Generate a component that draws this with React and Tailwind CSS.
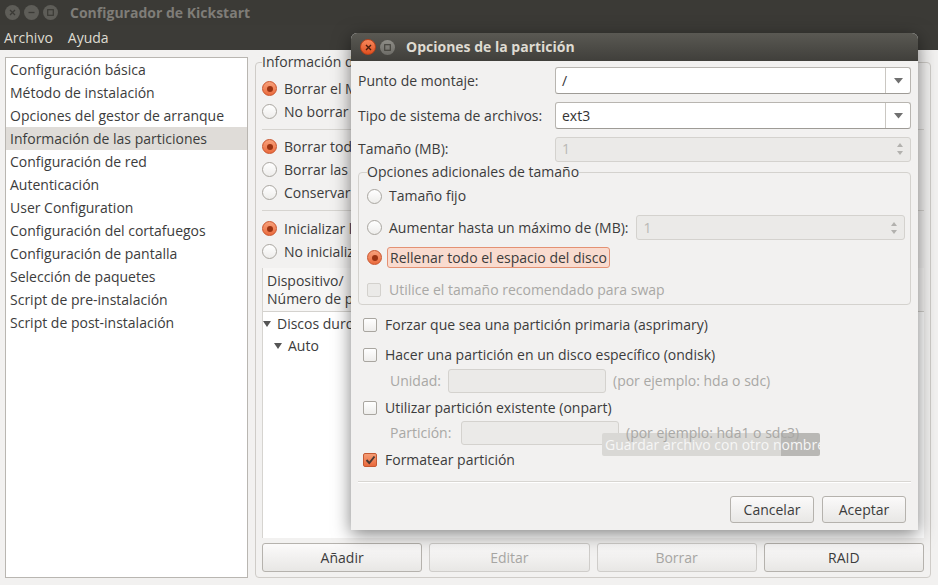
import React from 'react'

const Radio = ({ checked }) => (
  <span
    className={`w-[15px] h-[15px] rounded-full shrink-0 flex items-center justify-center border ${
      checked
        ? 'border-[#c9532b] bg-gradient-to-b from-[#f7a07a] to-[#ea6b3d]'
        : 'border-[#a9a6a0] bg-gradient-to-b from-white to-[#eeedeb]'
    }`}
  >
    {checked && <span className="w-[6px] h-[6px] rounded-full bg-[#9a3312]" />}
  </span>
)

const Check = ({ checked, disabled }) => (
  <span
    className={`w-[14px] h-[14px] rounded-[2px] shrink-0 border flex items-center justify-center ${
      checked
        ? 'border-[#c55a33] bg-gradient-to-b from-[#f59d75] to-[#e9693b]'
        : disabled
        ? 'border-[#d3d1cd] bg-[#ebeae8]'
        : 'border-[#a9a6a0] bg-gradient-to-b from-white to-[#eeedeb]'
    }`}
  >
    {checked && (
      <svg width="11" height="10" viewBox="0 0 11 10">
        <path d="M1.5 5 L4.3 8 L9.5 1.5" fill="none" stroke="#4b3a33" strokeWidth="2" />
      </svg>
    )}
  </span>
)

const Combo = ({ value }) => (
  <div className="flex h-[27px] w-[356px] rounded-[3px] border border-[#b8b5b0] border-b-[#9e9b96] bg-white">
    <div className="flex-1 flex items-center pl-[6px] text-[#333]">{value}</div>
    <div className="w-[25px] border-l border-[#cac7c2] flex items-center justify-center">
      <svg width="9" height="6" viewBox="0 0 9 6">
        <polygon points="0,0 9,0 4.5,5.5" fill="#707070" />
      </svg>
    </div>
  </div>
)

const Spin = ({ className }) => (
  <div className={`flex h-[25px] rounded-[3px] border border-[#d4d2ce] bg-[#ebeae8] ${className}`}>
    <div className="flex-1 flex items-center pl-[6px] text-[#b9b8b5]">1</div>
    <div className="w-[20px] flex flex-col items-center justify-center gap-[4px]">
      <svg width="6" height="4" viewBox="0 0 6 4"><polygon points="0,4 6,4 3,0" fill="#b2b1ae" /></svg>
      <svg width="6" height="4" viewBox="0 0 6 4"><polygon points="0,0 6,0 3,4" fill="#b2b1ae" /></svg>
    </div>
  </div>
)

const Btn = ({ children, disabled, className = '' }) => (
  <div
    className={`flex items-center justify-center rounded-[3px] border bg-gradient-to-b from-[#fbfafa] to-[#e8e7e5] ${
      disabled ? 'border-[#cfcdca] text-[#a7a6a3]' : 'border-[#b5b2ad] text-[#3c3c3c]'
    } ${className}`}
  >
    {children}
  </div>
)

const Arrow = () => (
  <svg width="8" height="7" viewBox="0 0 8 7" className="shrink-0">
    <polygon points="0,0 8,0 4,6" fill="#555" />
  </svg>
)

const sections = [
  'Configuración básica',
  'Método de instalación',
  'Opciones del gestor de arranque',
  'Información de las particiones',
  'Configuración de red',
  'Autenticación',
  'User Configuration',
  'Configuración del cortafuegos',
  'Configuración de pantalla',
  'Selección de paquetes',
  'Script de pre-instalación',
  'Script de post-instalación',
]

const RadioRow = ({ checked, children }) => (
  <div className="flex items-center gap-[7px] h-[23px] whitespace-nowrap">
    <Radio checked={checked} />
    <span>{children}</span>
  </div>
)

const CheckRow = ({ checked, children, className = '' }) => (
  <div className={`flex items-center gap-[8px] h-[20px] ml-[5px] whitespace-nowrap ${className}`}>
    <Check checked={checked} />
    <span>{children}</span>
  </div>
)

export default function App() {
  return (
    <div className="relative w-[938px] h-[585px] overflow-hidden bg-[#f2f1f0] text-[14px] leading-[18px] text-[#3c3c3c] font-['Open_Sans','Noto_Sans',sans-serif]">
      {/* title bar */}
      <div className="h-[25px] bg-[#3b3a36] flex items-center pl-[5px]">
        <div className="flex items-center gap-[4px]">
          {['x', '-', 'o'].map((g) => (
            <span key={g} className="w-[15px] h-[15px] rounded-full bg-[#5e5d58] flex items-center justify-center">
              <svg width="7" height="7" viewBox="0 0 7 7">
                {g === 'x' && <path d="M1 1 L6 6 M6 1 L1 6" stroke="#3b3a36" strokeWidth="1.3" />}
                {g === '-' && <path d="M0.5 3.5 H6.5" stroke="#3b3a36" strokeWidth="1.3" />}
                {g === 'o' && <rect x="0.7" y="0.7" width="5.6" height="5.6" fill="none" stroke="#3b3a36" strokeWidth="1.2" />}
              </svg>
            </span>
          ))}
        </div>
        <span className="ml-[12px] font-bold text-[14px] text-[#7f7d78]">Configurador de Kickstart</span>
      </div>
      {/* menu bar */}
      <div className="h-[25px] bg-[#3c3b37] flex items-center gap-[15px] pl-[4px] text-[#dfdbd2]">
        <span>Archivo</span>
        <span>Ayuda</span>
      </div>

      <div className="flex gap-[7px] pl-[5px] pr-[7px] pt-[3px] pb-[7px] h-[535px]">
        {/* sidebar */}
        <div className="w-[243px] mt-[4px] bg-white border border-[#b9b6b1]">
          {sections.map((s, i) => (
            <div key={s} className={`h-[23px] flex items-center pl-[4px] whitespace-nowrap ${i === 3 ? 'bg-[#dfdcd8]' : ''}`}>
              {s}
            </div>
          ))}
        </div>

        {/* right panel */}
        <fieldset className="flex-1 min-w-0 border border-[#cfccc8] rounded-[4px] px-[6px] pt-[6px] pb-[5px] flex flex-col">
          <legend className="px-0 whitespace-nowrap">Información de la partición</legend>
          <RadioRow checked>Borrar el Master Boot Record</RadioRow>
          <RadioRow>No borrar el Master Boot Record</RadioRow>
          <div className="mt-[6px] h-px bg-[#d6d4d0]" />
          <div className="mt-[5px]" />
          <RadioRow checked>Borrar todas las particiones existentes</RadioRow>
          <RadioRow>Borrar las particiones Linux existentes</RadioRow>
          <RadioRow>Conservar las particiones existentes</RadioRow>
          <div className="mt-[6px] h-px bg-[#d6d4d0]" />
          <div className="mt-[6px]" />
          <RadioRow checked>Inicializar la etiqueta del disco</RadioRow>
          <RadioRow>No inicializar la etiqueta del disco</RadioRow>

          <div className="mt-[5px] flex-1 bg-white border-l border-[#d6d4d0] flex flex-col">
            <div className="h-[44px] flex border-b border-[#d4d2ce] bg-[#f7f6f5]">
              {['Dispositivo/\nNúmero de partición', 'Punto de montaje/\nRAID/Volumen', 'Tipo', 'Formato', 'Tamaño (MB)', 'Inicio', 'Fin'].map((h) => (
                <div key={h} className="px-[4px] pt-[4px] whitespace-pre border-r border-[#e2e0dd] w-[140px] shrink-0">
                  {h}
                </div>
              ))}
            </div>
            <div className="flex items-center gap-[6px] h-[22px] mt-[1px] pl-[0px]">
              <Arrow />
              <span>Discos duros</span>
            </div>
            <div className="flex items-center gap-[6px] h-[22px] pl-[11px]">
              <Arrow />
              <span>Auto</span>
            </div>
          </div>

          <div className="mt-[5px] flex gap-[7px] h-[29px]">
            <Btn className="flex-1">Añadir</Btn>
            <Btn className="flex-1" disabled>Editar</Btn>
            <Btn className="flex-1" disabled>Borrar</Btn>
            <Btn className="flex-1">RAID</Btn>
          </div>
        </fieldset>
      </div>

      {/* dialog window */}
      <div className="absolute left-[351px] top-[33px] w-[567px] h-[497px] rounded-t-[6px] bg-[#f2f1f0] shadow-[0_4px_18px_rgba(0,0,0,0.5)] flex flex-col">
        <div className="h-[28px] rounded-t-[6px] bg-gradient-to-b from-[#5a5953] to-[#403f3b] flex items-center pl-[9px]">
          <span className="w-[16px] h-[16px] rounded-full bg-gradient-to-b from-[#f7875a] to-[#df4f1e] border border-[#b8421b] flex items-center justify-center">
            <svg width="7" height="7" viewBox="0 0 7 7">
              <path d="M1 1 L6 6 M6 1 L1 6" stroke="#4a1d0c" strokeWidth="1.4" />
            </svg>
          </span>
          <span className="ml-[4px] w-[15px] h-[15px] rounded-full bg-gradient-to-b from-[#8e8d87] to-[#6d6c67] flex items-center justify-center">
            <svg width="7" height="7" viewBox="0 0 7 7">
              <rect x="0.7" y="0.7" width="5.6" height="5.6" fill="none" stroke="#46453f" strokeWidth="1.2" />
            </svg>
          </span>
          <span className="ml-[11px] font-bold text-[#dfdbd2]">Opciones de la partición</span>
        </div>

        <div className="flex-1 flex flex-col px-[7px] pt-[6px]">
          <div className="flex items-center justify-between h-[27px]">
            <span>Punto de montaje:</span>
            <Combo value="/" />
          </div>
          <div className="flex items-center justify-between h-[27px] mt-[8px]">
            <span>Tipo de sistema de archivos:</span>
            <Combo value="ext3" />
          </div>
          <div className="flex items-center justify-between h-[24px] mt-[8px]">
            <span>Tamaño (MB):</span>
            <Spin className="w-[356px] h-[24px]" />
          </div>

          <fieldset className="mt-[2px] border border-[#d4d2ce] rounded-[4px] pl-[8px] pr-[5px] pt-[4px] pb-[4px] flex flex-col">
            <legend className="whitespace-nowrap">Opciones adicionales de tamaño</legend>
            <div className="flex items-center gap-[7px] h-[22px]">
              <Radio />
              <span>Tamaño fijo</span>
            </div>
            <div className="flex items-center gap-[7px] h-[25px] mt-[8px]">
              <Radio />
              <span className="whitespace-nowrap">Aumentar hasta un máximo de (MB):</span>
              <Spin className="flex-1 ml-[1px]" />
            </div>
            <div className="flex items-center gap-[5px] h-[21px] mt-[7px]">
              <Radio checked />
              <span className="h-[21px] flex items-center px-[2px] rounded-[3px] bg-[#f9dbcf] border border-[#e49173]">
                Rellenar todo el espacio del disco
              </span>
            </div>
            <div className="flex items-center gap-[8px] h-[20px] mt-[12px] text-[#a9a8a5]">
              <Check disabled />
              <span>Utilice el tamaño recomendado para swap</span>
            </div>
          </fieldset>

          <CheckRow className="mt-[10px]">Forzar que sea una partición primaria (asprimary)</CheckRow>
          <CheckRow className="mt-[10px]">Hacer una partición en un disco específico (ondisk)</CheckRow>
          <div className="flex items-center h-[24px] mt-[4px] ml-[32px] text-[#a9a8a5] whitespace-nowrap">
            <span className="w-[58px]">Unidad:</span>
            <div className="w-[158px] h-[24px] rounded-[3px] border border-[#d4d2ce] bg-[#ebeae8]" />
            <span className="ml-[7px]">(por ejemplo: hda o sdc)</span>
          </div>
          <CheckRow className="mt-[5px]">Utilizar partición existente (onpart)</CheckRow>
          <div className="flex items-center h-[24px] mt-[3px] ml-[32px] text-[#a9a8a5] whitespace-nowrap">
            <span className="w-[71px]">Partición:</span>
            <div className="w-[158px] h-[24px] rounded-[3px] border border-[#d4d2ce] bg-[#ebeae8]" />
            <span className="ml-[7px] relative z-10">(por ejemplo: hda1 o sdc3)</span>
          </div>
          <CheckRow checked className="mt-[5px]">Formatear partición</CheckRow>

          <div className="mt-[11px] h-px bg-[#d8d6d2] border-b border-white box-content" />

          <div className="mt-[13px] flex justify-end gap-[8px] pr-[5px]">
            <Btn className="w-[84px] h-[27px]">Cancelar</Btn>
            <Btn className="w-[84px] h-[27px]">Aceptar</Btn>
          </div>
        </div>
      </div>

      {/* fading tooltip */}
      <div className="absolute left-[602px] top-[433px] w-[218px] h-[23px] rounded-[2px] bg-[linear-gradient(to_right,#d9d8d5_82%,#b9b8b5_82%)] flex items-center pl-[3px] text-[#f6f6f5] whitespace-nowrap overflow-hidden">
        Guardar archivo con otro nombre
      </div>
    </div>
  )
}
